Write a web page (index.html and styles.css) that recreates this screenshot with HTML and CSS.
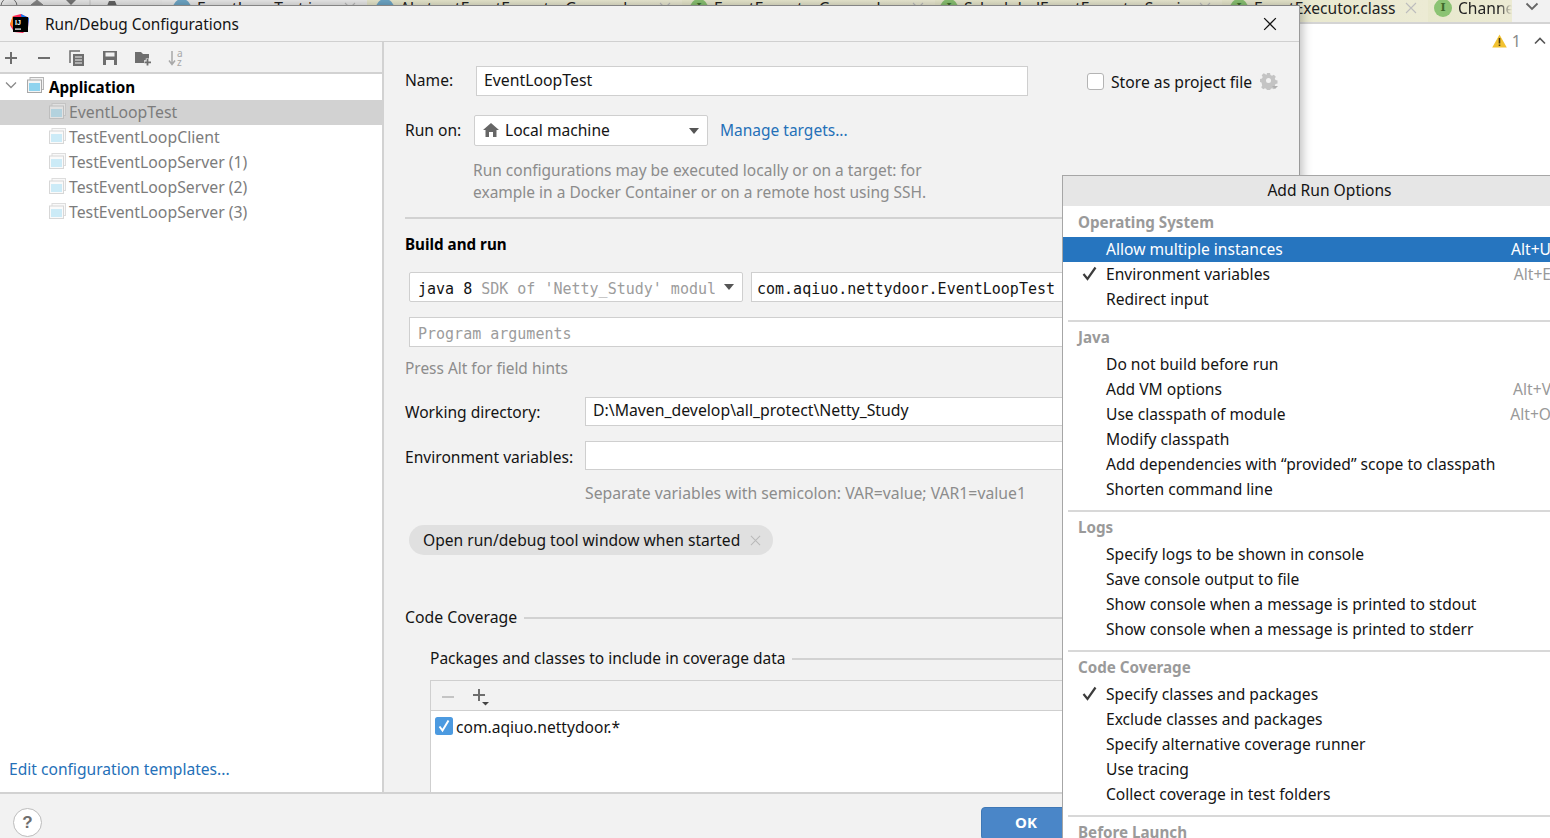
FILE: index.html
```html
<!DOCTYPE html>
<html lang="en">
<head>
<meta charset="utf-8">
<title>Run/Debug Configurations</title>
<link rel="stylesheet" href="styles.css">
</head>
<body>
<svg class="defs" width="0" height="0" aria-hidden="true">
  <symbol id="app" viewBox="0 0 17 17">
    <rect x="3" y="0.5" width="13.5" height="12" fill="#f2f2f2" stroke="#b5b5b5"/>
    <rect x="0.5" y="3" width="14" height="12.5" fill="#f5f5f5" stroke="#a8a8a8"/>
    <rect x="2" y="6" width="11" height="8" fill="#8fd3ee"/>
  </symbol>
  <symbol id="close" viewBox="0 0 12 12">
    <path d="M1 1l10 10M11 1L1 11" fill="none" stroke="currentColor" stroke-width="1.1"/>
  </symbol>
  <symbol id="arrow" viewBox="0 0 10 6">
    <path d="M0 0h10L5 6z" fill="#555"/>
  </symbol>
  <symbol id="check" viewBox="0 0 15 15">
    <path d="M1.5 8l4 5L13.5 1.5" fill="none" stroke="#3c3c3c" stroke-width="2.2"/>
  </symbol>
</svg>

<div class="ide">
  <div class="topbar">
    <div class="tools">
      <svg class="tool-tip" width="150" height="6" viewBox="0 0 150 6"><circle cx="9" cy="6" r="8" fill="none" stroke="#6e6e6e"/><path d="M37 0l-6 5h12zM31 5h12" fill="#888" stroke="#888"/><path d="M66 0h10l-5 5z" fill="#777"/><path d="M90 0v6" stroke="#c8c8c8"/><path d="M107 6l2-5h6l2 5z" fill="#666"/></svg>
    </div>
    <div class="tab tab-a"><i class="dot dot-blue"></i><span class="tab-label">EventLoopTest.java</span><svg class="tab-x"><use href="#close"/></svg></div>
    <div class="tab tab-b"><i class="dot dot-blue"></i><span class="tab-label">AbstractEventExecutorGroup.class</span><svg class="tab-x"><use href="#close"/></svg></div>
    <div class="tab tab-c"><i class="dot dot-green">I</i><span class="tab-label">EventExecutorGroup.class</span><svg class="tab-x"><use href="#close"/></svg></div>
    <div class="tab tab-d"><i class="dot dot-green">I</i><span class="tab-label">ScheduledEventExecutorService</span><svg class="tab-x"><use href="#close"/></svg></div>
    <div class="tab tab-e"><i class="dot dot-green">I</i><span class="tab-label">EventExecutor.class</span><svg class="tab-x"><use href="#close"/></svg></div>
    <div class="tab tab-f"><i class="dot dot-green">I</i><span class="tab-label">Channel</span></div>
    <div class="tab-more"><svg width="14" height="9" viewBox="0 0 14 9"><path d="M1.5 1.5L7 7l5.500-5.500" fill="none" stroke="#666" stroke-width="1.800"/></svg></div>
  </div>
  <div class="editor">
    <svg width="15" height="14" viewBox="0 0 15 14"><path d="M7.500 0.500L14.800 13.500H0.200z" fill="#f2c230"/><path d="M6.700 4h1.600v5.500H6.700zM6.700 10.500h1.600v1.600H6.700z" fill="#4a3a10"/></svg>
    <span class="warn-count">1</span>
    <svg class="warn-up" width="12" height="8" viewBox="0 0 12 8"><path d="M1 6.500L6 1.500l5 5" fill="none" stroke="#555" stroke-width="1.600"/></svg>
  </div>
</div>

<div class="dialog">
  <div class="titlebar">
    <svg class="logo" width="22" height="22" viewBox="0 0 22 22">
      <path d="M4 3L12 1l8 4-1 10-5 5-9-1-4-7z" fill="#fe2857"/>
      <path d="M12 1l8 4-1 9-6-6z" fill="#087cfa"/>
      <path d="M1 11l3-8 5 4-2 11z" fill="#fe7f1c"/>
      <rect x="4" y="4" width="15" height="15" fill="#000"/>
      <text x="6" y="11.500" class="logo-text">IJ</text>
      <rect x="6" y="15.500" width="6" height="1.200" fill="#fff"/>
    </svg>
    <span class="title-text">Run/Debug Configurations</span>
    <svg class="title-close"><use href="#close"/></svg>
  </div>

  <div class="main">
    <aside class="sidebar">
      <div class="side-tools">
        <svg class="ti" viewBox="0 0 16 16"><path d="M8 2v12M2 8h12" stroke="#6e6e6e" stroke-width="2"/></svg>
        <svg class="ti" viewBox="0 0 16 16"><path d="M2 8h12" stroke="#6e6e6e" stroke-width="2"/></svg>
        <svg class="ti" viewBox="0 0 16 16"><path d="M1 13V1h10" fill="none" stroke="#6e6e6e" stroke-width="1.500"/><path d="M4 4h11v12H4z" fill="#6e6e6e"/><path d="M6 7h7M6 10h7M6 13h7" stroke="#f2f2f2"/></svg>
        <svg class="ti" viewBox="0 0 16 16"><path d="M1 1h14v14H1z" fill="#6e6e6e"/><path d="M3.500 2.500h9v4h-9zM4 10h8v5H4z" fill="#f2f2f2"/></svg>
        <svg class="ti" viewBox="0 0 16 16"><path d="M0 2h6l2 2h6v9H0z" fill="#6e6e6e"/><path d="M12.500 8.500v7M9 12h7" stroke="#f2f2f2" stroke-width="3.500"/><path d="M12.500 9v6.500M9.500 12.300H16" stroke="#6e6e6e" stroke-width="1.800"/></svg>
        <svg class="ti" viewBox="0 0 16 16"><path d="M4 1v13M1 10.500l3 4 3-4" fill="none" stroke="#a8a8a8" stroke-width="1.500"/><text x="9" y="7" class="sort-text">a</text><text x="9" y="15.500" class="sort-text">z</text></svg>
      </div>
      <div class="tree">
        <div class="tree-row tree-root">
          <svg class="chev" width="12" height="8" viewBox="0 0 12 8"><path d="M1 1.500l5 5 5-5" fill="none" stroke="#8a8a8a" stroke-width="1.300"/></svg>
          <svg class="app-icon"><use href="#app"/></svg>
          <span>Application</span>
        </div>
        <div class="tree-row tree-child is-selected"><svg class="app-icon dim"><use href="#app"/></svg><span>EventLoopTest</span></div>
        <div class="tree-row tree-child"><svg class="app-icon dim"><use href="#app"/></svg><span>TestEventLoopClient</span></div>
        <div class="tree-row tree-child"><svg class="app-icon dim"><use href="#app"/></svg><span>TestEventLoopServer (1)</span></div>
        <div class="tree-row tree-child"><svg class="app-icon dim"><use href="#app"/></svg><span>TestEventLoopServer (2)</span></div>
        <div class="tree-row tree-child"><svg class="app-icon dim"><use href="#app"/></svg><span>TestEventLoopServer (3)</span></div>
        <a class="link templates">Edit configuration templates...</a>
      </div>
    </aside>

    <section class="form">
      <div class="row row-name">
        <label class="lbl lbl-name">Name:</label>
        <div class="field field-name">EventLoopTest</div>
        <span class="box"></span>
        <span class="store">Store as project file</span>
        <svg class="gear" width="18" height="18" viewBox="0 0 18 18"><path d="M7 1h3l.5 2 1.500.700 1.800-1 2 2-1 1.800.700 1.500 2 .500v3l-2 .500-.700 1.500 1 1.800-2 2-1.800-1-1.500.700-.500 2H7l-.500-2-1.500-.700-1.800 1-2-2 1-1.800L1.500 10.500l-1.500-.500v-3l2-.500.700-1.500-1-1.800 2-2 1.800 1L6.500 3z" fill="#c4c4c4"/><circle cx="8.500" cy="8.500" r="2.500" fill="#f2f2f2"/><path d="M12 14h6l-3 3z" fill="#b0b0b0"/></svg>
      </div>
      <div class="row row-run">
        <label class="lbl lbl-run">Run on:</label>
        <div class="field combo combo-run">
          <svg class="home" width="16" height="14" viewBox="0 0 16 14"><path d="M8 0l8 7h-2.500v7H10V9H6v5H2.500V7H0z" fill="#666"/></svg>
          <span>Local machine</span>
          <svg class="caret"><use href="#arrow"/></svg>
        </div>
        <a class="link manage">Manage targets...</a>
      </div>
      <p class="hint hint-run">Run configurations may be executed locally or on a target: for<br>example in a Docker Container or on a remote host using SSH.</p>
      <div class="divider"></div>
      <h2 class="heading">Build and run</h2>
      <div class="row row-java">
        <div class="field combo combo-java mono"><span class="java-text">java 8 <em>SDK of 'Netty_Study' modul</em></span><svg class="caret"><use href="#arrow"/></svg></div>
        <div class="field field-main mono">com.aqiuo.nettydoor.EventLoopTest</div>
      </div>
      <div class="field field-args mono">Program arguments</div>
      <p class="hint hint-alt">Press Alt for field hints</p>
      <div class="row row-wd">
        <label class="lbl lbl-wide">Working directory:</label>
        <div class="field field-wide">D:\Maven_develop\all_protect\Netty_Study</div>
      </div>
      <div class="row row-env">
        <label class="lbl lbl-wide">Environment variables:</label>
        <div class="field field-wide"></div>
      </div>
      <p class="hint hint-env">Separate variables with semicolon: VAR=value; VAR1=value1</p>
      <div class="chip"><span>Open run/debug tool window when started</span><svg class="chip-x"><use href="#close"/></svg></div>
      <div class="legend legend-cov"><span>Code Coverage</span><i></i></div>
      <div class="legend legend-pkg"><span>Packages and classes to include in coverage data</span><i></i></div>
      <div class="panel">
        <div class="panel-tools">
          <svg class="pt" viewBox="0 0 18 18"><path d="M3 9h12" stroke="#c4c4c4" stroke-width="2"/></svg>
          <svg class="pt" viewBox="0 0 18 18"><path d="M7 1v12M1 7h12" stroke="#6e6e6e" stroke-width="2"/><path d="M10 14h7l-3.500 3.500z" fill="#444"/></svg>
        </div>
        <div class="panel-list">
          <svg class="tick" width="18" height="18" viewBox="0 0 18 18"><rect width="18" height="18" rx="2.500" fill="#4c9ae0"/><path d="M4.500 9.500l3 4L13.500 3.500" fill="none" stroke="#fff" stroke-width="2"/></svg>
          <span>com.aqiuo.nettydoor.*</span>
        </div>
      </div>
    </section>
  </div>

  <div class="footer">
    <span class="help">?</span>
    <button class="ok">OK</button>
  </div>
</div>

<div class="popup">
  <div class="popup-head">Add Run Options</div>
  <div class="group group-first">
    <div class="group-label">Operating System</div>
    <div class="item is-active"><span class="slot"></span><span>Allow multiple instances</span><span class="key">Alt+U</span></div>
    <div class="item"><span class="slot"><svg class="mark"><use href="#check"/></svg></span><span>Environment variables</span><span class="key">Alt+E</span></div>
    <div class="item"><span class="slot"></span><span>Redirect input</span></div>
  </div>
  <div class="group">
    <div class="group-label">Java</div>
    <div class="item"><span class="slot"></span><span>Do not build before run</span></div>
    <div class="item"><span class="slot"></span><span>Add VM options</span><span class="key">Alt+V</span></div>
    <div class="item"><span class="slot"></span><span>Use classpath of module</span><span class="key">Alt+O</span></div>
    <div class="item"><span class="slot"></span><span>Modify classpath</span></div>
    <div class="item"><span class="slot"></span><span>Add dependencies with “provided” scope to classpath</span></div>
    <div class="item"><span class="slot"></span><span>Shorten command line</span></div>
  </div>
  <div class="group">
    <div class="group-label">Logs</div>
    <div class="item"><span class="slot"></span><span>Specify logs to be shown in console</span></div>
    <div class="item"><span class="slot"></span><span>Save console output to file</span></div>
    <div class="item"><span class="slot"></span><span>Show console when a message is printed to stdout</span></div>
    <div class="item"><span class="slot"></span><span>Show console when a message is printed to stderr</span></div>
  </div>
  <div class="group">
    <div class="group-label">Code Coverage</div>
    <div class="item"><span class="slot"><svg class="mark"><use href="#check"/></svg></span><span>Specify classes and packages</span></div>
    <div class="item"><span class="slot"></span><span>Exclude classes and packages</span></div>
    <div class="item"><span class="slot"></span><span>Specify alternative coverage runner</span></div>
    <div class="item"><span class="slot"></span><span>Use tracing</span></div>
    <div class="item"><span class="slot"></span><span>Collect coverage in test folders</span></div>
  </div>
  <div class="group">
    <div class="group-label">Before Launch</div>
  </div>
</div>
</body>
</html>
```

FILE: styles.css
```css
* { box-sizing: border-box; }
html, body { margin: 0; height: 100%; }
body {
  position: relative;
  width: 1550px;
  height: 838px;
  overflow: hidden;
  background: #fff;
  color: #141414;
  font: 15.6px/20px "Noto Sans", "Open Sans", sans-serif;
}
.defs { position: absolute; }
p, h2 { margin: 0; }

/* IDE behind the dialog */
.ide { display: flex; flex-direction: column; height: 100%; }
.topbar {
  display: flex;
  height: 24px;
  flex: none;
  background: #f2f2f2;
  border-bottom: 2px solid #d4d4d4;
}
.tools { width: 162px; flex: none; background: linear-gradient(#e8e8e8, #f2f2f2); overflow: hidden; }
.tool-tip { display: block; }
.tab {
  display: flex;
  align-items: flex-start;
  flex: none;
  background: linear-gradient(90deg, #e8e8cd, #ecebd4);
  color: #222;
  overflow: hidden;
}
.tab-a { width: 205px; background: #ebebeb; padding-left: 11px; }
.tab-b { width: 315px; padding-left: 9px; }
.tab-c { width: 253px; padding-left: 8px; }
.tab-d { width: 287px; padding-left: 5px; }
.tab-e { width: 206px; padding-left: 8px; }
.tab-f { width: 84px; padding-left: 6px; }
.dot {
  width: 18px;
  height: 18px;
  flex: none;
  margin-top: -1px;
  border-radius: 50%;
  font: bold 11px/18px "DejaVu Serif", serif;
  text-align: center;
  color: #3f6b2c;
}
.dot-blue { background: #6fa8c8; }
.dot-green { background: #8bc373; }
.tab-label { flex: 1; margin-left: 6px; line-height: 16px; white-space: nowrap; overflow: hidden; }
.tab-x { width: 12px; height: 12px; flex: none; margin: 2px 11px 0 0; color: #bdbdbd; }
.tab-f .tab-label { -webkit-mask-image: linear-gradient(90deg, #000 75%, transparent 100%); mask-image: linear-gradient(90deg, #000 75%, transparent 100%); }
.tab-more { flex: 1; padding: 2px 0 0 13px; line-height: 0; }
.editor {
  display: flex;
  align-items: center;
  justify-content: flex-end;
  height: 34px;
  padding-right: 4px;
  color: #8a8a8a;
}
.warn-count { margin: 0 13px 0 5px; font-size: 16px; }

/* Dialog */
.dialog {
  position: absolute;
  left: 0;
  top: 5px;
  width: 1300px;
  height: 833px;
  display: flex;
  flex-direction: column;
  background: #f2f2f2;
  border-top: 1px solid #858585;
  border-right: 1px solid #9a9a9a;
  box-shadow: 2px 0 10px rgba(0, 0, 0, .28);
}
.titlebar {
  display: flex;
  align-items: center;
  flex: none;
  height: 36px;
  padding: 0 22px 0 9px;
  border-bottom: 1px solid #d0d0d0;
}
.logo { flex: none; }
.logo-text { font: bold 7px "Liberation Sans", sans-serif; fill: #fff; }
.title-text { margin-left: 14px; padding-top: 3px; font-size: 15.4px; }
.title-close { width: 14px; height: 14px; margin-left: auto; color: #111; }

.main { display: flex; flex: 1; min-height: 0; }
.sidebar {
  display: flex;
  flex-direction: column;
  flex: none;
  width: 384px;
  border-right: 2px solid #d2d2d2;
}
.side-tools {
  display: flex;
  align-items: center;
  gap: 17px;
  flex: none;
  height: 32px;
  padding: 2px 0 0 3px;
  border-bottom: 2px solid #d2d2d2;
}
.ti { width: 16px; height: 16px; flex: none; }
.sort-text { font: 10px "Noto Sans", sans-serif; fill: #a8a8a8; }
.tree { display: flex; flex-direction: column; flex: 1; padding-top: 1px; background: #fff; }
.tree-row { display: flex; align-items: center; flex: none; height: 25px; padding-bottom: 2px; }
.tree-root { padding-left: 5px; font-size: 15.2px; font-weight: 700; color: #000; }
.chev { flex: none; margin-top: -3px; }
.app-icon { width: 17px; height: 17px; flex: none; margin-left: 10px; margin-right: 5px; }
.tree-root .app-icon { margin-top: -2px; }
.tree-child { padding-left: 39px; font-size: 15.8px; color: #7c7c7c; }
.tree-child .app-icon { margin-left: 10px; margin-right: 3px; }
.dim { opacity: .45; }
.is-selected { background: #d2d2d2; }
.link { color: #2470b8; }
.templates { margin-top: auto; padding: 0 0 13px 9px; }

.form { flex: 1; min-width: 0; padding: 24px 20px 0 21px; overflow: hidden; }
.row { display: flex; align-items: center; }
.lbl { flex: none; margin-top: -2px; }
.lbl-name { width: 71px; }
.lbl-run { width: 69px; }
.lbl-wide { width: 180px; margin-top: 1px; }
.row-env .lbl-wide { margin-top: 3px; }
.field {
  flex: none;
  height: 30px;
  padding: 0 7px;
  background: #fff;
  border: 1px solid #cfcfcf;
  line-height: 26px;
  white-space: nowrap;
  overflow: hidden;
}
.mono { padding: 0 8px; font: 15px/32px "DejaVu Sans Mono", "Liberation Mono", monospace; }
.row-name { height: 30px; }
.field-name { width: 552px; font-size: 15.8px; }
.box { width: 17px; height: 17px; margin-left: 59px; background: #fff; border: 1px solid #b4b4b4; border-radius: 3px; }
.store { margin: 2px 0 0 7px; font-size: 15.7px; }
.gear { margin-left: 8px; }
.row-run { height: 31px; margin-top: 19px; }
.combo { display: flex; align-items: center; border-radius: 2px; }
.combo-run { width: 234px; height: 31px; padding: 0 8px 2px; }
.home { margin-right: 6px; }
.caret { width: 10px; height: 6px; flex: none; margin-left: auto; }
.combo-run .caret { margin-top: 2px; }
.manage { margin: -2px 0 0 12px; font-size: 15.5px; }
.hint { color: #8c8c8c; }
.hint-run { margin: 13px 0 0 68px; font-size: 15.5px; line-height: 22px; }
.divider { height: 2px; margin-top: 14px; background: #d2d2d2; }
.heading { margin-top: 15px; font-size: 15.2px; line-height: 20px; font-weight: 700; color: #000; }
.row-java { height: 30px; margin: 18px 0 0 4px; gap: 8px; }
.combo-java { width: 334px; padding-top: 3px; }
.combo-java .caret { margin-top: -3px; }
.java-text { display: block; width: 297px; flex: none; overflow: hidden; }
.java-text em { font-style: normal; color: #9c9c9c; }
.field-main { width: 560px; padding-left: 5px; }
.field-args { width: 868px; margin: 15px 0 0 4px; color: #9c9c9c; }
.hint-alt { margin-top: 11px; font-size: 15.45px; }
.row-wd { height: 29px; margin-top: 19px; }
.row-env { height: 29px; margin-top: 15px; }
.field-wide { width: 693px; height: 29px; font-size: 15.8px; line-height: 25px; }
.hint-env { margin: 13px 0 0 180px; font-size: 15.75px; }
.chip {
  display: flex;
  align-items: center;
  width: 364px;
  height: 30px;
  margin: 22px 0 0 4px;
  padding-left: 14px;
  background: #e0e0e0;
  border-radius: 15px;
}
.chip-x { width: 11px; height: 11px; margin-left: 10px; color: #b9b9b9; }
.legend { display: flex; align-items: center; gap: 7px; }
.legend i { flex: 1; height: 2px; margin-top: 1px; background: #d2d2d2; }
.legend-cov { margin-top: 52px; font-size: 15.8px; }
.legend-pkg { margin: 21px 0 0 25px; font-size: 15.5px; }
.panel { height: 140px; margin: 12px 0 0 25px; border: 1px solid #cfcfcf; border-right: 0; }
.panel-tools { display: flex; align-items: center; gap: 15px; height: 30px; padding: 2px 0 0 8px; border-bottom: 1px solid #cfcfcf; }
.pt { width: 18px; height: 18px; flex: none; }
.panel-list { display: flex; align-items: flex-start; gap: 3px; height: 110px; padding: 6px 0 0 4px; background: #fff; }
.tick { flex: none; }

.footer {
  display: flex;
  align-items: flex-start;
  justify-content: space-between;
  flex: none;
  height: 46px;
  padding: 13px 228px 0 13px;
  border-top: 2px solid #d2d2d2;
}
.help {
  width: 29px;
  height: 29px;
  margin-top: 1px;
  background: #fff;
  border: 1px solid #bcbcbc;
  border-radius: 50%;
  font: bold 17px/27px "Liberation Sans", sans-serif;
  text-align: center;
  color: #6e6e6e;
}
.ok {
  width: 90px;
  height: 33px;
  padding: 0 0 3px;
  background: #4a86c8;
  border: 1px solid #3f78b6;
  border-radius: 4px;
  font: bold 15px "Noto Sans", sans-serif;
  color: #fff;
}

/* Popup */
.popup {
  position: absolute;
  left: 1062px;
  top: 175px;
  width: 534px;
  height: 680px;
  background: #fff;
  border: 1px solid #a6a6a6;
  border-right: 0;
}
.popup-head { height: 30px; background: #e6e6e6; line-height: 29px; text-align: center; }
.group { margin-left: 5px; padding-bottom: 8px; border-top: 2px solid #d8d8d8; }
.group-first { padding-top: 1px; border-top: 0; }
.group-label { height: 30px; padding-left: 10px; font-size: 15.2px; font-weight: 700; line-height: 31px; color: #9a9a9a; }
.item { display: flex; align-items: center; height: 25px; margin-left: -5px; padding: 0 45px 2px 0; }
.slot { display: flex; align-items: center; justify-content: flex-end; flex: none; width: 43px; padding-right: 9px; }
.mark { width: 15px; height: 15px; }
.key { margin-left: auto; color: #999; }
.is-active { background: #2675bf; color: #fff; }
.is-active .key { color: #fff; }
```
